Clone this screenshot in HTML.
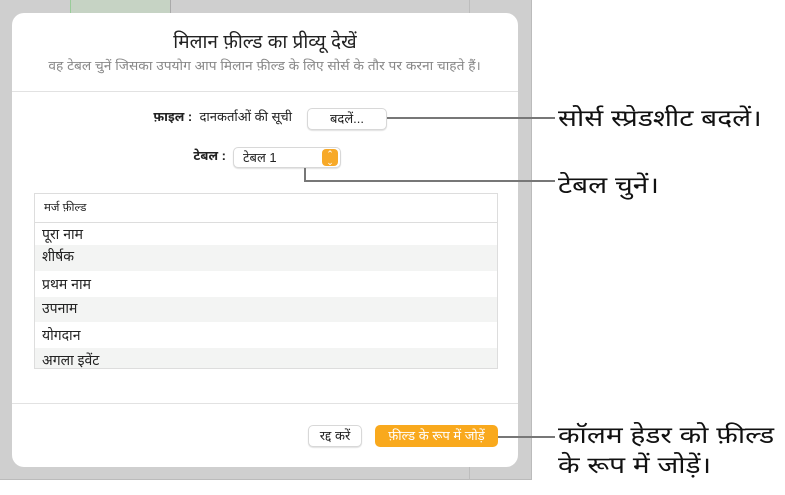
<!DOCTYPE html>
<html><head><meta charset="utf-8"><style>
*{margin:0;padding:0;box-sizing:border-box}
body{width:785px;height:495px;background:#fff;position:relative;overflow:hidden;font-family:"Liberation Sans","Noto Sans Devanagari","Lohit Devanagari",sans-serif;color:#222}
.abs{position:absolute}
.bg{left:0;top:0;width:532px;height:480px;background:#cfcfcf;border-right:1px solid #bbb;border-bottom:1px solid #bbb}
.dlg{left:12px;top:13px;width:506px;height:454px;background:#fff;border-radius:12px}
.sep{height:1px;background:#e2e2e2;left:12px;width:506px}
.btn{background:#fff;border:1px solid #d8d8d8;border-radius:5px;box-shadow:0 1px 1px rgba(0,0,0,.12);font-size:13px;text-align:center}
.line{background:#777}
.call{font-size:23px;color:#111;left:558px;line-height:30px;transform:scaleX(1.22);transform-origin:0 0;white-space:nowrap}
.row{left:35px;width:462px;font-size:14px;padding-left:7px;line-height:22px}
</style></head><body>
<div class="abs bg"></div>
<div class="abs" style="left:469px;top:0;width:1px;height:480px;background:#bdbdbd"></div>
<div class="abs" style="left:70px;top:0;width:101px;height:13px;background:#c6d3c4;border-left:1px solid #9c9;border-right:1px solid #aaa"></div>
<div class="abs dlg"></div>
<div class="abs" style="left:12px;top:31px;width:506px;text-align:center;font-size:19px">मिलान फ़ील्ड का प्रीव्यू देखें</div>
<div class="abs" style="left:12px;top:59px;width:506px;text-align:center;font-size:12.5px;color:#888"><span style="display:inline-block;transform:scaleX(1.1)">वह टेबल चुनें जिसका उपयोग आप मिलान फ़ील्ड के लिए सोर्स के तौर पर करना चाहते हैं।</span></div>
<div class="abs sep" style="top:91px"></div>
<div class="abs" style="left:60px;top:109px;width:232px;font-size:13px;text-align:right"><b>फ़ाइल :</b>&nbsp; दानकर्ताओं की सूची</div>
<div class="abs btn" style="left:307px;top:108px;width:80px;height:22px;line-height:20px">बदलें...</div>
<div class="abs" style="left:150px;top:148px;width:76px;text-align:right;font-size:13px;font-weight:bold">टेबल :</div>
<div class="abs btn" style="left:233px;top:147px;width:108px;height:21px;line-height:19px;text-align:left;padding-left:9px">टेबल 1</div>
<div class="abs" style="left:322px;top:149px;width:16px;height:17px;background:#f7a928;border-radius:4px;color:#fff;font-size:9px;line-height:8px;text-align:center;padding-top:1px">⌃<br>⌄</div>
<div class="abs" style="left:34px;top:193px;width:464px;height:176px;border:1px solid #ddd;background:#fff"></div>
<div class="abs row" style="top:194px;height:29px;line-height:29px;font-size:11.5px;border-bottom:1px solid #ddd;padding-left:9px">मर्ज फ़ील्ड</div>
<div class="abs row" style="top:223px;height:22px">पूरा नाम</div>
<div class="abs row" style="top:245px;height:26px;background:#f3f4f3">शीर्षक</div>
<div class="abs row" style="top:271px;height:26px;line-height:26px">प्रथम नाम</div>
<div class="abs row" style="top:297px;height:25px;background:#f3f4f3">उपनाम</div>
<div class="abs row" style="top:322px;height:26px;line-height:26px">योगदान</div>
<div class="abs row" style="top:348px;height:20px;background:#f3f4f3;overflow:hidden;line-height:24px">अगला इवेंट</div>
<div class="abs sep" style="top:403px"></div>
<div class="abs btn" style="left:308px;top:425px;width:54px;height:22px;line-height:20px">रद्द करें</div>
<div class="abs" style="left:375px;top:425px;width:123px;height:22px;line-height:21px;background:#f9a91d;border-radius:5px;color:#fff;font-size:13px;text-align:center">फ़ील्ड के रूप में जोड़ें</div>
<div class="abs line" style="left:387px;top:117px;width:168px;height:2px"></div>
<div class="abs line" style="left:304px;top:168px;width:2px;height:14px"></div>
<div class="abs line" style="left:304px;top:180px;width:251px;height:2px"></div>
<div class="abs line" style="left:498px;top:436px;width:57px;height:2px"></div>
<div class="abs call" style="top:103px">सोर्स स्प्रेडशीट बदलें।</div>
<div class="abs call" style="top:170px">टेबल चुनें।</div>
<div class="abs call" style="top:420px">कॉलम हेडर को फ़ील्ड<br>के रूप में जोड़ें।</div>
</body></html>
